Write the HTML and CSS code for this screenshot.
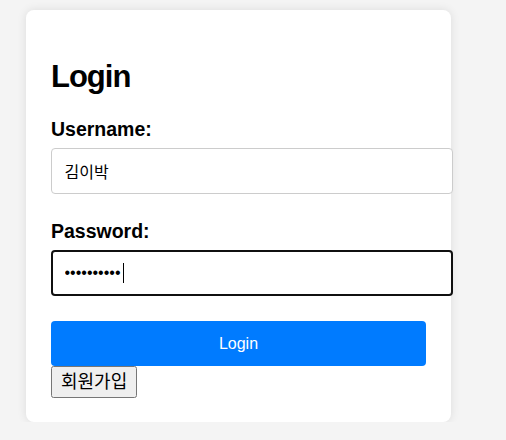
FILE: index.html
```html
<!DOCTYPE html>
<html lang="ko">
<head>
  <meta charset="UTF-8" />
  <meta name="viewport" content="width=device-width, initial-scale=1.0"/>
  <title>Login</title>
  <link rel="stylesheet" href="styles.css">
</head>
<body>

<div class="container">
  <h1>Login</h1>

  <form id="loginForm">
    <div class="form-group">
      <label for="username">Username:</label>
      <input type="text" id="username" value="김이박" />
    </div>

    <div class="form-group">
      <label for="password">Password:</label>
      <div class="field">
        <input type="password" id="password" class="active" value="1234567890" />
        <span class="caret"></span>
      </div>
    </div>

    <button type="button" class="login-btn">Login</button>
  </form>

  <button type="button" class="signup-btn">회원가입</button>
</div>

</body>
</html>
```

FILE: styles.css
```css
body {
  background-color: #f4f4f4;
  margin: 0;
  padding: 10px 0 0 26px;
  font-family: "Liberation Sans", Arial, "Noto Sans CJK KR", sans-serif;
}
.container {
  background: white;
  padding: 25px 25px 24px;
  border-radius: 8px;
  width: 375px;
  box-shadow: 0 0 10px rgba(0,0,0,0.1);
}
h1 {
  font-size: 31px;
  letter-spacing: -1px;
  margin: 24px 0 23px;
}
.form-group {
  margin-bottom: 25.5px;
}
label {
  display: block;
  font-size: 19.5px;
  font-weight: bold;
  margin-bottom: 7px;
}
input {
  display: block;
  width: 100%;
  height: 20px;
  padding: 12px 12.5px;
  border: 1px solid #ccc;
  border-radius: 4px;
  font-family: inherit;
  font-size: 16px;
}
input.active {
  border: 2px solid #101010;
  padding: 11px 11.5px;
}
.field {
  position: relative;
}
.caret {
  position: absolute;
  left: 72px;
  top: 13px;
  width: 1px;
  height: 20px;
  background: #000;
}
.login-btn {
  display: block;
  width: 100%;
  padding: 13px;
  line-height: 19px;
  background: #007bff;
  color: white;
  border: none;
  border-radius: 4px;
  font-family: inherit;
  font-size: 16px;
}
.signup-btn {
  font-family: inherit;
  font-size: 18px;
  line-height: 26px;
  padding: 1px 8px;
}
```
